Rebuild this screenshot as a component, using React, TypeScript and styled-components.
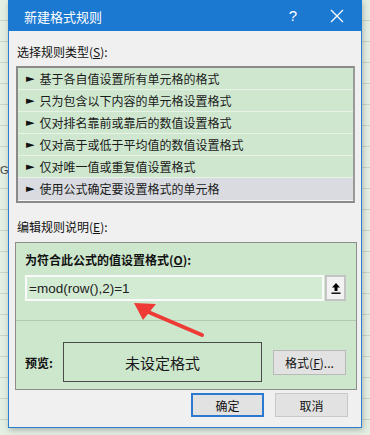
import { FunctionComponent } from "react";
import { styled, createGlobalStyle } from "styled-components";

const GlobalStyle = createGlobalStyle`
  html, body {
    margin: 0;
    padding: 0;
    width: 370px;
    height: 435px;
    overflow: hidden;
  }
  body {
    font-family: "Noto Sans CJK SC", "Liberation Sans", sans-serif;
  }
`;

const ruleTypes = [
  "基于各自值设置所有单元格的格式",
  "只为包含以下内容的单元格设置格式",
  "仅对排名靠前或靠后的数值设置格式",
  "仅对高于或低于平均值的数值设置格式",
  "仅对唯一值或重复值设置格式",
  "使用公式确定要设置格式的单元格",
];

const App: FunctionComponent = () => {
  return (
    <>
      <GlobalStyle />
      <Sheet>
        <EdgeGlyph>G</EdgeGlyph>
        <Dialog>
          <TitleBar>
            <Title>新建格式规则</Title>
            <TitleButton>?</TitleButton>
            <TitleButton $wide>
              <svg width="14" height="14" viewBox="0 0 14 14">
                <path d="M1 1L13 13M13 1L1 13" stroke="#fff" strokeWidth="1.3" />
              </svg>
            </TitleButton>
          </TitleBar>
          <Body>
            <Label>
              选择规则类型(<u>S</u>):
            </Label>
            <ListBox>
              {ruleTypes.map((text, i) => (
                <ListRow key={text} $selected={i === ruleTypes.length - 1}>
                  <Bullet>►</Bullet>
                  {text}
                </ListRow>
              ))}
            </ListBox>
            <Label $top={16}>
              编辑规则说明(<u>E</u>):
            </Label>
            <Panel>
              <PanelHeading>
                为符合此公式的值设置格式(<u>O</u>):
              </PanelHeading>
              <FormulaRow>
                <FormulaInput>=mod(row(),2)=1</FormulaInput>
                <CollapseButton>
                  <svg width="10" height="12" viewBox="0 0 10 12">
                    <path d="M5 1L1 5.5H3.5V9H6.5V5.5H9Z" fill="#000" />
                    <rect x="0.5" y="10.5" width="9" height="1.4" fill="#000" />
                  </svg>
                </CollapseButton>
              </FormulaRow>
              <Divider />
              <PreviewRow>
                <PreviewLabel>预览:</PreviewLabel>
                <PreviewBox>未设定格式</PreviewBox>
                <SmallButton>
                  格式(<u>F</u>)...
                </SmallButton>
              </PreviewRow>
              <Arrow width="80" height="40" viewBox="0 0 80 40">
                <path d="M76 34L20 10" stroke="#ee3b36" strokeWidth="4" strokeLinecap="round" />
                <path d="M8 2L30 3L17 19Z" fill="#ee3b36" />
              </Arrow>
            </Panel>
            <Footer>
              <DialogButton $primary>确定</DialogButton>
              <DialogButton>取消</DialogButton>
            </Footer>
          </Body>
        </Dialog>
      </Sheet>
    </>
  );
};

export default App;

const Sheet = styled.div`
  position: relative;
  width: 370px;
  height: 435px;
  background-color: #e4efe4;
  background-image: repeating-linear-gradient(
    to bottom,
    transparent 0px,
    transparent 20px,
    #c9d6c9 20px,
    #c9d6c9 21px
  );
  display: flex;
  align-items: flex-start;
  padding-left: 8px;
  box-sizing: border-box;
`;

const EdgeGlyph = styled.span`
  position: absolute;
  left: 0;
  top: 164px;
  font-family: "Liberation Sans", sans-serif;
  font-size: 11px;
  color: #444;
`;

const Dialog = styled.div`
  width: 354px;
  height: 428px;
  background: #f0f0f0;
  border: 1px solid #2a7fd2;
  border-top: none;
  box-sizing: border-box;
  box-shadow: 1px 2px 6px rgba(0, 0, 0, 0.25);
  display: flex;
  flex-direction: column;
`;

const TitleBar = styled.div`
  height: 31px;
  background: #1c79d2;
  margin: 0 -1px;
  display: flex;
  align-items: center;
  padding-left: 16px;
  color: #fff;
`;

const Title = styled.div`
  flex: 1;
  font-size: 13px;
  padding-top: 1px;
`;

const TitleButton = styled.div<{ $wide?: boolean }>`
  width: ${(p) => (p.$wide ? "46px" : "34px")};
  display: flex;
  justify-content: center;
  align-items: center;
  font-family: "Liberation Sans", sans-serif;
  font-size: 15px;
  margin-right: ${(p) => (p.$wide ? "2px" : "4px")};
`;

const Body = styled.div`
  flex: 1;
  display: flex;
  flex-direction: column;
  padding: 13px 5px 0 5px;
  position: relative;
`;

const Label = styled.div<{ $top?: number }>`
  font-size: 12px;
  color: #111;
  line-height: 16px;
  margin-top: ${(p) => p.$top ?? 0}px;
  margin-left: 3px;

  u {
    text-decoration-thickness: 1px;
  }
`;

const ListBox = styled.div`
  margin: 6px 1px 0 2px;
  border: 2px solid #8a8a8a;
  border-right-color: #9a9a9a;
  background: #f7f7f7;
  display: flex;
  flex-direction: column;
  padding: 0 0 1px 0;
`;

const ListRow = styled.div<{ $selected?: boolean }>`
  height: 21px;
  display: flex;
  align-items: center;
  font-size: 12px;
  color: #1a1a1a;
  background: ${(p) => (p.$selected ? "#d9dbe0" : "#cfe7cf")};
  border-bottom: 1px solid ${(p) => (p.$selected ? "#d9dbe0" : "#e7f3e7")};
  padding-left: 8px;
`;

const Bullet = styled.span`
  font-family: "DejaVu Sans", sans-serif;
  font-size: 11px;
  margin-right: 5px;
  color: #111;
`;

const Panel = styled.div`
  position: relative;
  margin: 7px 0 0 1px;
  width: 342px;
  height: 148px;
  box-sizing: border-box;
  border: 1px solid #8c8c8c;
  background: #cde7cd;
  display: flex;
  flex-direction: column;
  padding: 9px 8px 0 9px;
`;

const PanelHeading = styled.div`
  font-size: 12px;
  font-weight: bold;
  color: #111;
  line-height: 16px;
`;

const FormulaRow = styled.div`
  margin-top: 7px;
  display: flex;
  align-items: stretch;
  height: 26px;
`;

const FormulaInput = styled.div`
  width: 299px;
  box-sizing: border-box;
  border: 2px solid #fafafa;
  background: #d3ebd3;
  font-family: "Liberation Sans", sans-serif;
  font-size: 13.5px;
  color: #222;
  display: flex;
  align-items: center;
  padding-left: 2px;
`;

const CollapseButton = styled.div`
  width: 21px;
  margin-left: 1px;
  box-sizing: border-box;
  border: 2px solid #c4c4c4;
  background: #f2f2f2;
  display: flex;
  align-items: center;
  justify-content: center;
`;

const Divider = styled.div`
  margin: 19px -8px 0 -9px;
  height: 1px;
  background: #b2c8b2;
`;

const PreviewRow = styled.div`
  margin-top: 21px;
  display: flex;
  align-items: center;
`;

const PreviewLabel = styled.div`
  width: 38px;
  font-size: 12px;
  font-weight: bold;
  color: #111;
`;

const PreviewBox = styled.div`
  width: 199px;
  height: 40px;
  box-sizing: border-box;
  border: 1px solid #4a4a4a;
  display: flex;
  align-items: center;
  justify-content: center;
  font-size: 15px;
  color: #1a1a1a;
`;

const SmallButton = styled.div`
  margin-left: 11px;
  width: 73px;
  height: 25px;
  box-sizing: border-box;
  border: 1px solid #b9b9b9;
  background: #e2e2e2;
  display: flex;
  align-items: center;
  justify-content: center;
  font-size: 12px;
  color: #111;
`;

const Arrow = styled.svg`
  position: absolute;
  left: 110px;
  top: 58px;
`;

const Footer = styled.div`
  display: flex;
  justify-content: flex-end;
  gap: 11px;
  margin-top: 3px;
  padding-right: 8px;
`;

const DialogButton = styled.div<{ $primary?: boolean }>`
  width: 73px;
  height: 24px;
  box-sizing: border-box;
  border: ${(p) => (p.$primary ? "2px solid #2b7ad0" : "1px solid #c8c8c8")};
  background: #e2e2e2;
  display: flex;
  align-items: center;
  justify-content: center;
  font-size: 12px;
  color: #111;
`;
